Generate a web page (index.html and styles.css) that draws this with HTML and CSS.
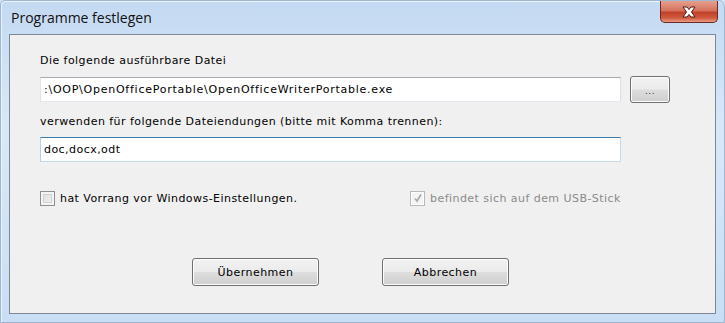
FILE: index.html
```html
<!DOCTYPE html>
<html lang="de">
<head>
<meta charset="utf-8">
<title>Programme festlegen</title>
<link rel="stylesheet" href="styles.css">
</head>
<body>
<div class="window">
  <div class="titlebar">
    <span class="title">Programme festlegen</span>
    <span class="close">
      <svg width="16" height="12" viewBox="0 0 16 12">
        <path d="M2 1 H6 L8 3.5 L10 1 H14 L10.5 6 L14 11 H10 L8 8.5 L6 11 H2 L5.5 6 Z" fill="#fff" stroke="#4a1d14" stroke-width="1"/>
      </svg>
    </span>
  </div>
  <div class="client">
    <div class="label">Die folgende ausführbare Datei</div>
    <div class="filerow">
      <div class="input path">:\OOP\OpenOfficePortable\OpenOfficeWriterPortable.exe</div>
      <div class="btn small">...</div>
    </div>
    <div class="label second">verwenden für folgende Dateiendungen (bitte mit Komma trennen):</div>
    <div class="input focused">doc,docx,odt</div>
    <div class="checks">
      <div class="check first"><span class="box"></span><span>hat Vorrang vor Windows-Einstellungen.</span></div>
      <div class="check disabled"><span class="box">
        <svg width="10" height="10" viewBox="0 0 10 10"><path d="M2 5.5 L4 8 L8 1.5" fill="none" stroke="#a8a8a8" stroke-width="1.6"/></svg>
      </span><span>befindet sich auf dem USB-Stick</span></div>
    </div>
    <div class="buttons">
      <div class="btn wide">Übernehmen</div>
      <div class="btn wide">Abbrechen</div>
    </div>
  </div>
</div>
</body>
</html>
```
FILE: styles.css
```css
html, body {
  margin: 0;
  padding: 0;
}
body {
  width: 725px;
  height: 323px;
  overflow: hidden;
  background: #cfe0f2;
  font-family: "DejaVu Sans", Tahoma, sans-serif;
  font-size: 11px;
  letter-spacing: 0.45px;
  color: #000;
}
.window {
  box-sizing: border-box;
  width: 725px;
  height: 323px;
  display: flex;
  flex-direction: column;
  background: linear-gradient(180deg, #c4daf2 0%, #d8e8f8 40%, #c9def4 100%);
  border: 1px solid #9fb6cf;
  border-top-right-radius: 7px;
  border-top-left-radius: 5px;
  box-shadow: inset 1px 1px 0 #eaf2fb;
}
.titlebar {
  height: 33px;
  flex: none;
  display: flex;
  align-items: flex-start;
  justify-content: space-between;
}
.title {
  font-family: "Open Sans", "Noto Sans", sans-serif;
  font-size: 14px;
  letter-spacing: 0;
  color: #111;
  margin: 7px 0 0 10px;
}
.close {
  width: 58px;
  height: 22px;
  margin-right: 6px;
  box-sizing: border-box;
  border: 1px solid #6b2a22;
  border-top: none;
  border-radius: 0 0 5px 5px;
  background: linear-gradient(180deg, #e5a08f 0%, #d6735d 45%, #c1412a 55%, #cf5a3f 80%, #e89b82 100%);
  display: flex;
  align-items: center;
  justify-content: center;
}
.client {
  flex: 1;
  margin: 0 8px 8px 8px;
  border: 1px solid #7d8896;
  background: #f0f0f0;
  padding: 19px 0 0 30px;
  display: flex;
  flex-direction: column;
  align-items: flex-start;
}
.label {
  line-height: 14px;
  height: 14px;
  margin-bottom: 8px;
  color: #000;
}
.label.second {
  margin-top: 12px;
}
.filerow {
  display: flex;
  align-items: center;
  gap: 9px;
}
.input {
  box-sizing: border-box;
  width: 581px;
  height: 25px;
  border: 1px solid #abadb3;
  border-top-color: #a5a9b0;
  border-left-color: #e2e3ea;
  border-right-color: #dbdfe6;
  border-bottom-color: #e3e9ef;
  background: #fff;
  padding: 0 3px;
  line-height: 23px;
  white-space: nowrap;
  overflow: hidden;
}
.input.path {
  letter-spacing: 0.75px;
}
.input.focused {
  border-color: #c5daed;
  border-top-color: #3d7bad;
  border-left-color: #b5cfe7;
}
.btn {
  box-sizing: border-box;
  height: 27px;
  border: 1px solid #707070;
  border-radius: 3px;
  background: linear-gradient(180deg, #f2f2f2 0%, #ebebeb 48%, #dddddd 52%, #cfcfcf 100%);
  box-shadow: inset 0 0 0 1px #fcfcfc;
  display: flex;
  align-items: center;
  justify-content: center;
  color: #000;
}
.btn.small {
  width: 40px;
  height: 27px;
  font-size: 9px;
  padding-top: 3px;
  letter-spacing: 0.5px;
  color: #333;
}
.checks {
  display: flex;
  margin-top: 28px;
  height: 16px;
  align-items: center;
}
.check {
  display: flex;
  align-items: center;
  gap: 5px;
}
.check.first {
  width: 370px;
}
.check.disabled {
  color: #8a8a8a;
}
.box {
  box-sizing: border-box;
  width: 15px;
  height: 15px;
  border: 1px solid #8e8f8f;
  background: linear-gradient(135deg, #dcdcdc 0%, #f4f4f4 100%);
  box-shadow: inset 0 0 0 2px #f4f4f4, inset 0 0 0 3px #d0d0d0;
  display: flex;
  align-items: center;
  justify-content: center;
}
.check.disabled .box {
  border-color: #b8b8b8;
  background: #f4f4f4;
  box-shadow: inset 0 0 0 1px #fff;
}
.buttons {
  display: flex;
  gap: 63px;
  margin-top: 52px;
  margin-left: 152px;
}
.btn.wide {
  width: 127px;
  height: 28px;
}
```
